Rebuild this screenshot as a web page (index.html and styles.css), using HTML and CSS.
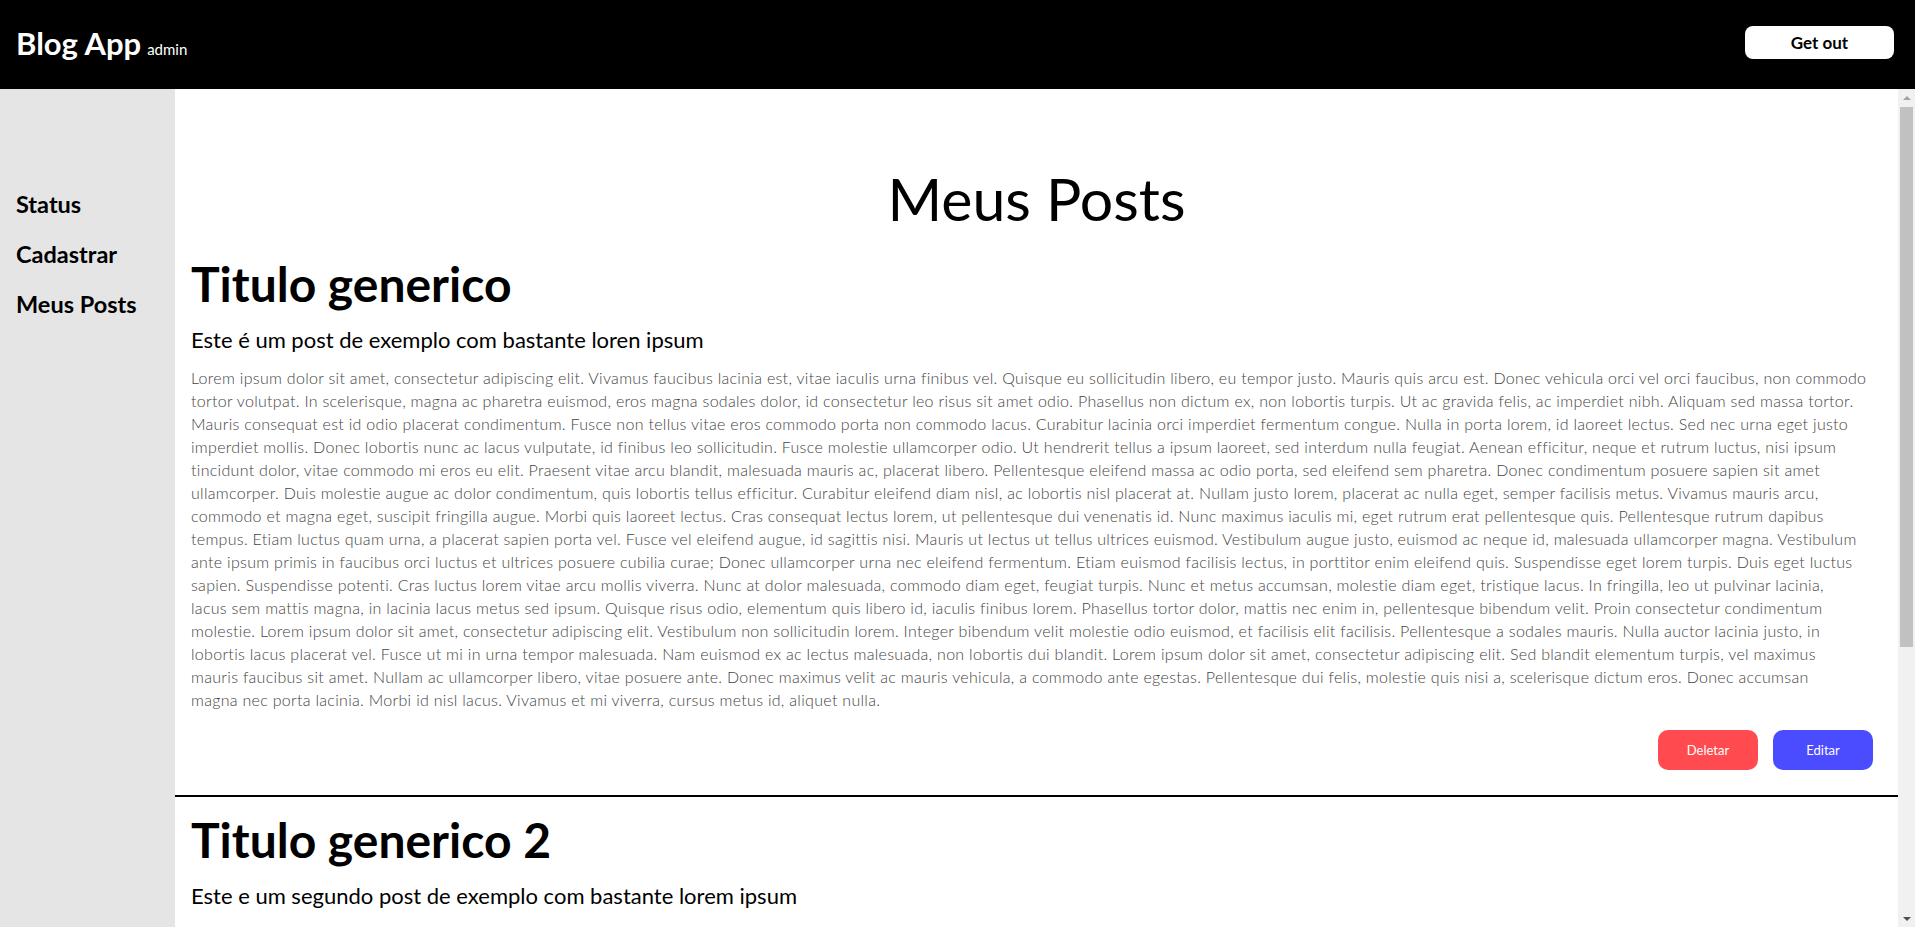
FILE: index.html
```html
<!DOCTYPE html>
<html lang="pt-BR">
<head>
<meta charset="utf-8">
<title>Blog App</title>
<link rel="stylesheet" href="styles.css">
</head>
<body>
<header class="topbar">
  <div class="brand"><span class="brand-name">Blog App</span><span class="brand-user">admin</span></div>
  <button class="logout">Get out</button>
</header>
<div class="layout">
  <nav class="sidebar">
    <a class="nav-link" href="#">Status</a>
    <a class="nav-link" href="#">Cadastrar</a>
    <a class="nav-link" href="#">Meus Posts</a>
  </nav>
  <main class="content">
    <h1 class="page-title">Meus Posts</h1>
    <article class="post">
      <h2 class="post-title">Titulo generico</h2>
      <h3 class="post-subtitle">Este é um post de exemplo com bastante loren ipsum</h3>
      <p class="post-body">Lorem ipsum dolor sit amet, consectetur adipiscing elit. Vivamus faucibus lacinia est, vitae iaculis urna finibus vel. Quisque eu sollicitudin libero, eu tempor justo. Mauris quis arcu est. Donec vehicula orci vel orci faucibus, non commodo<br>tortor volutpat. In scelerisque, magna ac pharetra euismod, eros magna sodales dolor, id consectetur leo risus sit amet odio. Phasellus non dictum ex, non lobortis turpis. Ut ac gravida felis, ac imperdiet nibh. Aliquam sed massa tortor.<br>Mauris consequat est id odio placerat condimentum. Fusce non tellus vitae eros commodo porta non commodo lacus. Curabitur lacinia orci imperdiet fermentum congue. Nulla in porta lorem, id laoreet lectus. Sed nec urna eget justo<br>imperdiet mollis. Donec lobortis nunc ac lacus vulputate, id finibus leo sollicitudin. Fusce molestie ullamcorper odio. Ut hendrerit tellus a ipsum laoreet, sed interdum nulla feugiat. Aenean efficitur, neque et rutrum luctus, nisi ipsum<br>tincidunt dolor, vitae commodo mi eros eu elit. Praesent vitae arcu blandit, malesuada mauris ac, placerat libero. Pellentesque eleifend massa ac odio porta, sed eleifend sem pharetra. Donec condimentum posuere sapien sit amet<br>ullamcorper. Duis molestie augue ac dolor condimentum, quis lobortis tellus efficitur. Curabitur eleifend diam nisl, ac lobortis nisl placerat at. Nullam justo lorem, placerat ac nulla eget, semper facilisis metus. Vivamus mauris arcu,<br>commodo et magna eget, suscipit fringilla augue. Morbi quis laoreet lectus. Cras consequat lectus lorem, ut pellentesque dui venenatis id. Nunc maximus iaculis mi, eget rutrum erat pellentesque quis. Pellentesque rutrum dapibus<br>tempus. Etiam luctus quam urna, a placerat sapien porta vel. Fusce vel eleifend augue, id sagittis nisi. Mauris ut lectus ut tellus ultrices euismod. Vestibulum augue justo, euismod ac neque id, malesuada ullamcorper magna. Vestibulum<br>ante ipsum primis in faucibus orci luctus et ultrices posuere cubilia curae; Donec ullamcorper urna nec eleifend fermentum. Etiam euismod facilisis lectus, in porttitor enim eleifend quis. Suspendisse eget lorem turpis. Duis eget luctus<br>sapien. Suspendisse potenti. Cras luctus lorem vitae arcu mollis viverra. Nunc at dolor malesuada, commodo diam eget, feugiat turpis. Nunc et metus accumsan, molestie diam eget, tristique lacus. In fringilla, leo ut pulvinar lacinia,<br>lacus sem mattis magna, in lacinia lacus metus sed ipsum. Quisque risus odio, elementum quis libero id, iaculis finibus lorem. Phasellus tortor dolor, mattis nec enim in, pellentesque bibendum velit. Proin consectetur condimentum<br>molestie. Lorem ipsum dolor sit amet, consectetur adipiscing elit. Vestibulum non sollicitudin lorem. Integer bibendum velit molestie odio euismod, et facilisis elit facilisis. Pellentesque a sodales mauris. Nulla auctor lacinia justo, in<br>lobortis lacus placerat vel. Fusce ut mi in urna tempor malesuada. Nam euismod ex ac lectus malesuada, non lobortis dui blandit. Lorem ipsum dolor sit amet, consectetur adipiscing elit. Sed blandit elementum turpis, vel maximus<br>mauris faucibus sit amet. Nullam ac ullamcorper libero, vitae posuere ante. Donec maximus velit ac mauris vehicula, a commodo ante egestas. Pellentesque dui felis, molestie quis nisi a, scelerisque dictum eros. Donec accumsan<br>magna nec porta lacinia. Morbi id nisl lacus. Vivamus et mi viverra, cursus metus id, aliquet nulla.</p>
      <div class="post-actions">
        <button class="btn btn-delete">Deletar</button>
        <button class="btn btn-edit">Editar</button>
      </div>
    </article>
    <article class="post">
      <h2 class="post-title">Titulo generico 2</h2>
      <h3 class="post-subtitle">Este e um segundo post de exemplo com bastante lorem ipsum</h3>
      <p class="post-body">Lorem ipsum dolor sit amet, consectetur adipiscing elit. Vivamus faucibus lacinia est, vitae iaculis urna finibus vel. Quisque eu sollicitudin libero, eu tempor justo. Mauris quis arcu est. Donec vehicula orci vel orci faucibus, non commodo<br>tortor volutpat. In scelerisque, magna ac pharetra euismod, eros magna sodales dolor, id consectetur leo risus sit amet odio. Phasellus non dictum ex, non lobortis turpis. Ut ac gravida felis, ac imperdiet nibh. Aliquam sed massa tortor.<br>Mauris consequat est id odio placerat condimentum. Fusce non tellus vitae eros commodo porta non commodo lacus. Curabitur lacinia orci imperdiet fermentum congue. Nulla in porta lorem, id laoreet lectus. Sed nec urna eget justo<br>imperdiet mollis. Donec lobortis nunc ac lacus vulputate, id finibus leo sollicitudin. Fusce molestie ullamcorper odio. Ut hendrerit tellus a ipsum laoreet, sed interdum nulla feugiat. Aenean efficitur, neque et rutrum luctus, nisi ipsum<br>tincidunt dolor, vitae commodo mi eros eu elit. Praesent vitae arcu blandit, malesuada mauris ac, placerat libero. Pellentesque eleifend massa ac odio porta, sed eleifend sem pharetra. Donec condimentum posuere sapien sit amet<br>ullamcorper. Duis molestie augue ac dolor condimentum, quis lobortis tellus efficitur. Curabitur eleifend diam nisl, ac lobortis nisl placerat at. Nullam justo lorem, placerat ac nulla eget, semper facilisis metus. Vivamus mauris arcu,<br>commodo et magna eget, suscipit fringilla augue. Morbi quis laoreet lectus. Cras consequat lectus lorem, ut pellentesque dui venenatis id. Nunc maximus iaculis mi, eget rutrum erat pellentesque quis. Pellentesque rutrum dapibus<br>tempus. Etiam luctus quam urna, a placerat sapien porta vel. Fusce vel eleifend augue, id sagittis nisi. Mauris ut lectus ut tellus ultrices euismod. Vestibulum augue justo, euismod ac neque id, malesuada ullamcorper magna. Vestibulum<br>ante ipsum primis in faucibus orci luctus et ultrices posuere cubilia curae; Donec ullamcorper urna nec eleifend fermentum. Etiam euismod facilisis lectus, in porttitor enim eleifend quis. Suspendisse eget lorem turpis. Duis eget luctus<br>sapien. Suspendisse potenti. Cras luctus lorem vitae arcu mollis viverra. Nunc at dolor malesuada, commodo diam eget, feugiat turpis. Nunc et metus accumsan, molestie diam eget, tristique lacus. In fringilla, leo ut pulvinar lacinia,<br>lacus sem mattis magna, in lacinia lacus metus sed ipsum. Quisque risus odio, elementum quis libero id, iaculis finibus lorem. Phasellus tortor dolor, mattis nec enim in, pellentesque bibendum velit. Proin consectetur condimentum<br>molestie. Lorem ipsum dolor sit amet, consectetur adipiscing elit. Vestibulum non sollicitudin lorem. Integer bibendum velit molestie odio euismod, et facilisis elit facilisis. Pellentesque a sodales mauris. Nulla auctor lacinia justo, in<br>lobortis lacus placerat vel. Fusce ut mi in urna tempor malesuada. Nam euismod ex ac lectus malesuada, non lobortis dui blandit. Lorem ipsum dolor sit amet, consectetur adipiscing elit. Sed blandit elementum turpis, vel maximus<br>mauris faucibus sit amet. Nullam ac ullamcorper libero, vitae posuere ante. Donec maximus velit ac mauris vehicula, a commodo ante egestas. Pellentesque dui felis, molestie quis nisi a, scelerisque dictum eros. Donec accumsan<br>magna nec porta lacinia. Morbi id nisl lacus. Vivamus et mi viverra, cursus metus id, aliquet nulla.</p>
      <div class="post-actions">
        <button class="btn btn-delete">Deletar</button>
        <button class="btn btn-edit">Editar</button>
      </div>
    </article>
  </main>
  <div class="scrollbar" aria-hidden="true">
    <span class="sb-arrow sb-up"></span>
    <span class="sb-track"><span class="sb-thumb"></span></span>
    <span class="sb-arrow sb-down"></span>
  </div>
</div>
</body>
</html>
```
FILE: styles.css
```css
* { box-sizing: border-box; }

html, body {
  margin: 0;
  height: 100%;
}

body {
  font-family: Lato, "Noto Sans", sans-serif;
  color: #000;
  display: flex;
  flex-direction: column;
  overflow: hidden;
}

.topbar {
  flex: none;
  height: 89px;
  background: #000;
  display: flex;
  align-items: center;
  justify-content: space-between;
  padding: 0 21px 4px 16px;
}

.brand {
  color: #fff;
  display: flex;
  align-items: baseline;
}

.brand-name {
  font-size: 31px;
  font-weight: 700;
}

.brand-user {
  font-size: 15px;
  margin-left: 6px;
}

.logout {
  width: 149px;
  height: 33px;
  background: #fff;
  color: #000;
  border: none;
  border-radius: 8px;
  font-family: inherit;
  font-size: 17px;
  font-weight: 700;
}

.layout {
  flex: 1;
  min-height: 0;
  display: flex;
}

.sidebar {
  flex: none;
  width: 175px;
  background: #e5e5e5;
  padding: 90px 16px 0;
  display: flex;
  flex-direction: column;
}

.nav-link {
  font-size: 23.5px;
  font-weight: 700;
  line-height: 50px;
  color: #000;
  text-decoration: none;
}

.content {
  flex: 1;
  min-width: 0;
  overflow-y: auto;
  background: #fff;
}

/* visual vertical scrollbar of the content pane */
.scrollbar {
  flex: none;
  width: 17px;
  background: #f1f1f1;
  display: flex;
  flex-direction: column;
}

.sb-arrow {
  flex: none;
  height: 17px;
  display: flex;
  align-items: center;
  justify-content: center;
}

.sb-arrow::before {
  content: "";
  width: 0;
  height: 0;
  border-left: 4px solid transparent;
  border-right: 4px solid transparent;
}

.sb-up::before { border-bottom: 4px solid #a3a3a3; }
.sb-down::before { border-top: 4px solid #505050; }

.sb-track {
  flex: 1;
  padding: 1px 2px 0;
}

.sb-thumb {
  display: block;
  height: 540px;
  background: #c1c1c1;
}

.page-title {
  margin: 74px 0 6px;
  font-size: 59px;
  line-height: 72px;
  font-weight: 400;
  text-align: center;
}

.post {
  padding: 14px 16px 0;
  border-bottom: 2px solid #000;
}

.post-title {
  margin: 0;
  font-size: 48px;
  line-height: 58px;
  font-weight: 700;
}

.post-subtitle {
  margin: 14px 0 0;
  font-size: 22px;
  line-height: 26px;
  font-weight: 400;
}

.post-body {
  margin: 13px 0 0;
  font-size: 16px;
  line-height: 23px;
  font-weight: 300;
  letter-spacing: 0.3px;
  color: #444;
}

.post-actions {
  display: flex;
  justify-content: flex-end;
  gap: 15px;
  margin-top: 19px;
  padding: 0 9px 25px 0;
}

.btn {
  width: 100px;
  height: 40px;
  border: none;
  border-radius: 10px;
  color: #fff;
  font-family: inherit;
  font-size: 13px;
}

.btn-delete { background: #ff4b4f; }
.btn-edit { background: #4b4bff; }
```
